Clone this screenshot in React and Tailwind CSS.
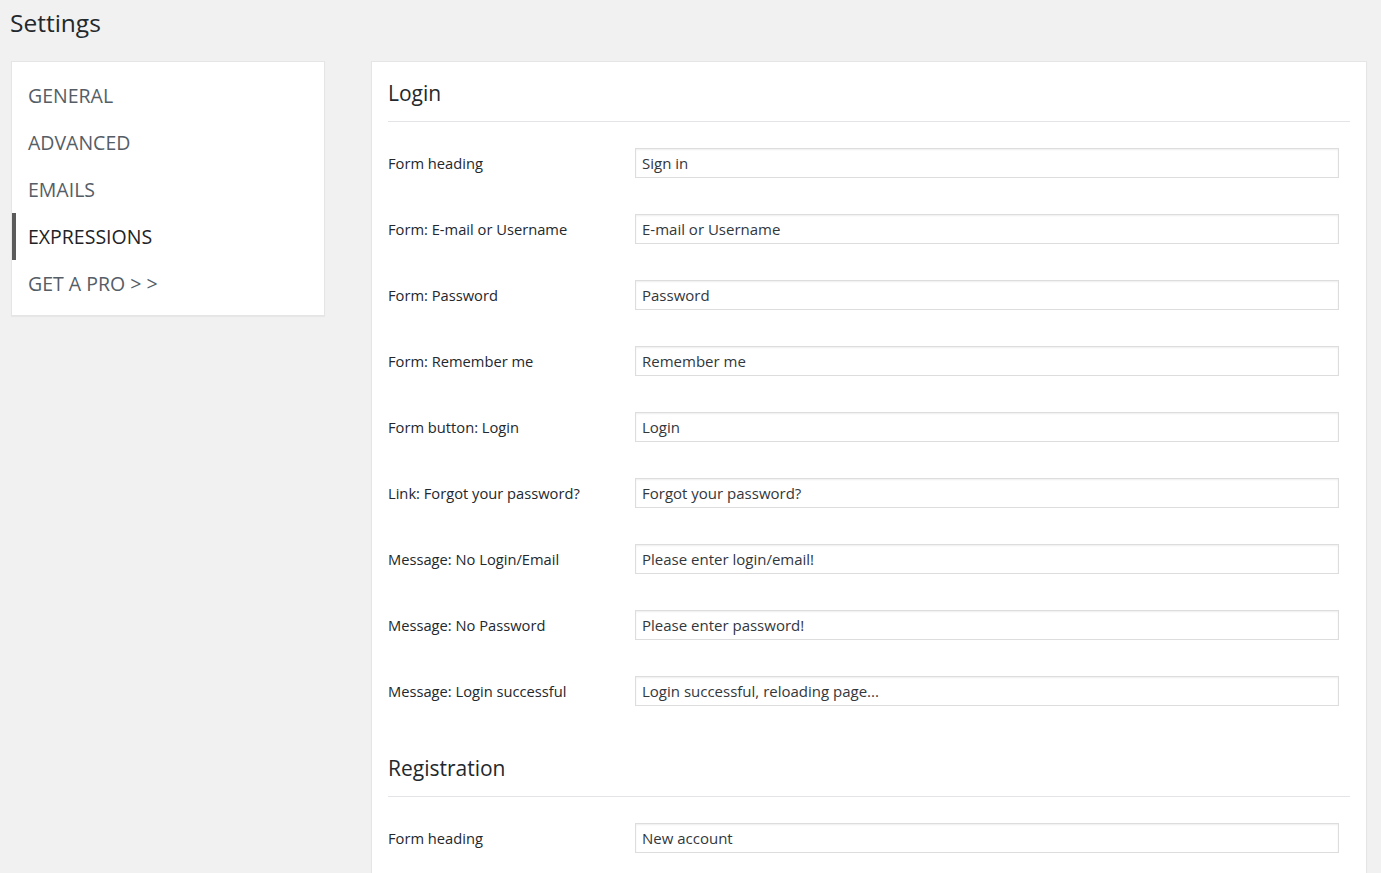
const nav = ['GENERAL', 'ADVANCED', 'EMAILS', 'EXPRESSIONS', 'GET A PRO >>'];

const login = [
  ['Form heading', 'Sign in'],
  ['Form: E-mail or Username', 'E-mail or Username'],
  ['Form: Password', 'Password'],
  ['Form: Remember me', 'Remember me'],
  ['Form button: Login', 'Login'],
  ['Link: Forgot your password?', 'Forgot your password?'],
  ['Message: No Login/Email', 'Please enter login/email!'],
  ['Message: No Password', 'Please enter password!'],
  ['Message: Login successful', 'Login successful, reloading page...'],
];

const registration = [['Form heading', 'New account']];

function Section({ title, rows }) {
  return (
    <div>
      <h2 className="text-[21px] leading-[28px] text-[#23282d] pt-[17px] pb-[14px] border-b border-[#e2e4e7]">{title}</h2>
      <div className="flex flex-col gap-[36px] pt-[26px] pr-[11px]">
        {rows.map(([label, value]) => (
          <div key={label + value} className="flex items-center">
            <label className="w-[247px] shrink-0 text-[14.7px] text-[#23282d]">{label}</label>
            <input
              defaultValue={value}
              className="flex-1 h-[30px] px-[6px] text-[15px] text-[#32373c] bg-white border border-[#dddddd] shadow-[inset_0_1px_2px_rgba(0,0,0,0.07)] outline-none"
            />
          </div>
        ))}
      </div>
    </div>
  );
}

export default function App() {
  return (
    <div className="bg-[#f1f1f1] font-['Open_Sans',sans-serif] pl-[10px] pr-[14px] overflow-hidden h-[873px]">
      <h1 className="text-[24.5px] leading-[32px] text-[#23282d] pt-[7px]">Settings</h1>
      <div className="flex items-start gap-[46px] mt-[22px]">
        <div className="ml-[1px] w-[314px] shrink-0 bg-white border border-[#e5e5e5] shadow-[0_1px_1px_rgba(0,0,0,0.04)] pt-[10px] pb-[8px]">
          {nav.map((item) => (
            <div
              key={item}
              className={
                'h-[47px] flex items-center pl-[12px] text-[19.5px] border-l-4 ' +
                (item === 'EXPRESSIONS' ? 'border-[#5b5b5b] text-[#1d2327]' : 'border-transparent text-[#555d66]')
              }
            >
              {item === 'GET A PRO >>' ? 'GET A PRO > >' : item}
            </div>
          ))}
        </div>
        <div className="flex-1 bg-white border border-[#e5e5e5] shadow-[0_1px_1px_rgba(0,0,0,0.04)] px-[16px] pb-[40px]">
          <Section title="Login" rows={login} />
          <div className="h-[31px]" />
          <Section title="Registration" rows={registration} />
        </div>
      </div>
    </div>
  );
}
